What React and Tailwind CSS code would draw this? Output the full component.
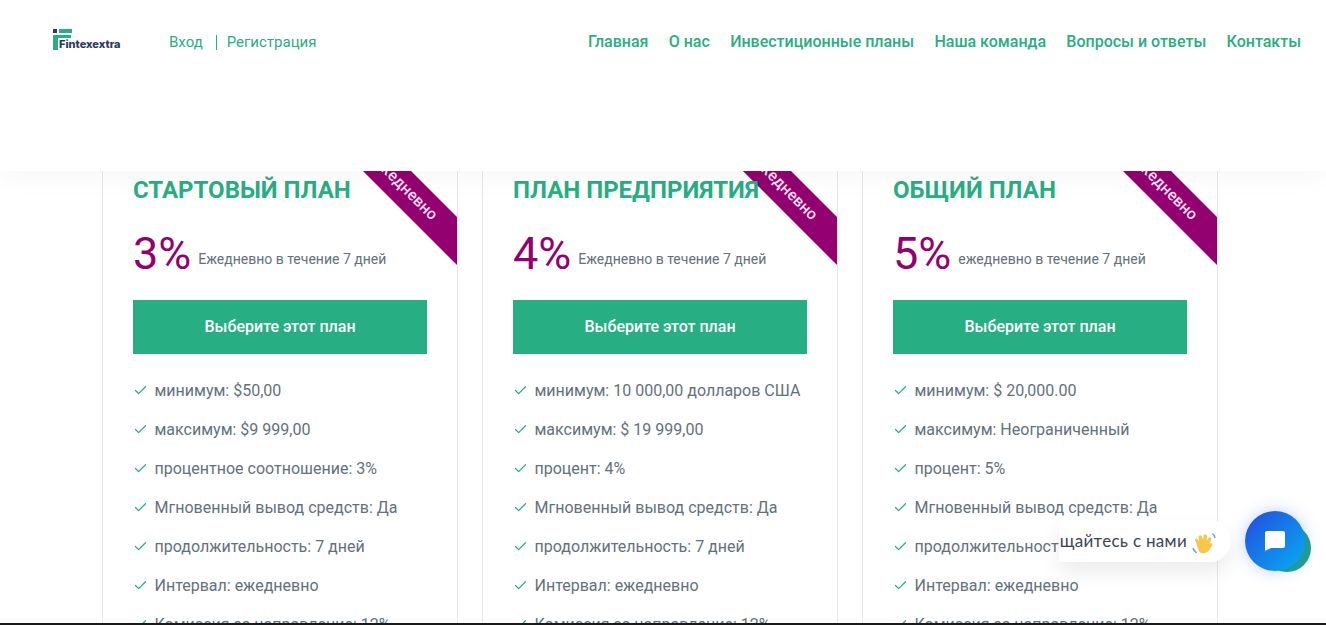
import React from "react";
import { Check } from "lucide-react";

const plans = [
  { t: "СТАРТОВЫЙ ПЛАН", p: "3%", s: "Ежедневно в течение 7 дней", i: ["минимум: $50,00", "максимум: $9 999,00", "процентное соотношение: 3%"] },
  { t: "ПЛАН ПРЕДПРИЯТИЯ", p: "4%", s: "Ежедневно в течение 7 дней", i: ["минимум: 10 000,00 долларов США", "максимум: $ 19 999,00", "процент: 4%"] },
  { t: "ОБЩИЙ ПЛАН", p: "5%", s: "ежедневно в течение 7 дней", i: ["минимум: $ 20,000.00", "максимум: Неограниченный", "процент: 5%"] },
];
const common = ["Мгновенный вывод средств: Да", "продолжительность: 7 дней", "Интервал: ежедневно", "Комиссия за направление: 12%"];
const nav = ["Главная", "О нас", "Инвестиционные планы", "Наша команда", "Вопросы и ответы", "Контакты"];

function Logo() {
  return (
    <div className="relative w-[68px] h-[21px] mb-[5px]">
      <svg width="20" height="21" viewBox="0 0 20 21" className="absolute left-0 top-0">
        <rect x="0" y="0" width="4" height="4" fill="#2b3a5e" />
        <rect x="6" y="0" width="13" height="4" fill="#27ae82" />
        <rect x="0" y="6" width="18" height="3" fill="#27ae82" />
        <rect x="0" y="6" width="5" height="15" fill="#27ae82" />
      </svg>
      <span className="absolute left-[6px] top-[9px] text-[11px] leading-[13px] font-extrabold text-[#2b3a5e] font-['Inter',sans-serif] whitespace-nowrap">Fintexextra</span>
    </div>
  );
}

function Card({ plan }) {
  return (
    <div className="relative w-[356px] h-full border-x border-[#e4e6e8] overflow-hidden px-[30px] pt-[4px]">
      <div className="absolute left-[269px] top-[-39px] w-[200px] h-[34px] rotate-45 origin-top-left bg-[#930070] flex items-center pl-[20px] pb-[3px] text-[16px] font-medium text-[#f3dcea]">
        <span>ежедневно</span>
      </div>
      <h3 className="relative text-[24px] leading-[30px] font-bold text-[#27ae82] whitespace-nowrap">{plan.t}</h3>
      <div className="flex items-center mt-[23px] h-[52px]">
        <span className="text-[45px] leading-[50px] text-[#930070]">{plan.p}</span>
        <span className="ml-[7px] mt-[10px] text-[14px] text-[#62717d]">{plan.s}</span>
      </div>
      <button className="mt-[20px] w-full h-[54px] bg-[#27ae82] text-white text-[16px] font-medium">Выберите этот план</button>
      <ul className="mt-[17px]">
        {[...plan.i, ...common].map((x) => (
          <li key={x} className="flex items-center h-[39px] text-[16px] text-[#62717d] whitespace-nowrap">
            <Check size={15} strokeWidth={2} className="text-[#27ae82] mr-[6.5px] shrink-0" />
            {x}
          </li>
        ))}
      </ul>
    </div>
  );
}

export default function App() {
  return (
    <div className="relative h-[625px] overflow-hidden bg-white flex flex-col font-['Roboto',sans-serif]">
      <header className="relative z-10 h-[171px] shrink-0 bg-white shadow-[0_8px_24px_rgba(0,0,0,0.03)] flex items-start justify-between pt-[29px] pl-[53px] pr-[25px]">
        <div className="flex items-center">
          <Logo />
          <div className="flex items-center h-[26px] ml-[48px] text-[15px] text-[#27ae82]">
            <span>Вход</span>
            <span className="ml-[13px] mr-[10px] w-px h-[15px] bg-[#27ae82]" />
            <span>Регистрация</span>
          </div>
        </div>
        <nav className="flex gap-[20.3px] h-[26px] items-center text-[16px] font-medium text-[#27ae82] whitespace-nowrap">
          {nav.map((n) => <span key={n}>{n}</span>)}
        </nav>
      </header>
      <main className="flex-1 min-h-0 flex justify-center gap-[24px] pr-[6px]">
        {plans.map((p) => <Card key={p.t} plan={p} />)}
      </main>
      <div className="h-[2px] shrink-0 bg-[#1a1a1a] relative z-10" />

      <div className="absolute z-20 left-[1059px] top-[520px] w-[172px] h-[42px] rounded-r-[21px] bg-white shadow-[0_10px_20px_rgba(0,0,0,0.08)] overflow-hidden flex items-center justify-end pr-[44px] text-[17px] tracking-[0.3px] text-[#3a4656] font-['Lato',sans-serif] whitespace-nowrap">
        <span>Пообщайтесь с нами</span>
      </div>
      <svg width="24" height="24" viewBox="0 0 24 24" className="absolute z-20 left-[1192px] top-[531px]">
        <path d="M5 14 L3 9 Q3 7 5 7.500 L7 10 L6.500 5.500 Q8 3.500 9.500 5 L11 8.500 L12 3.500 Q14.500 2.500 15 5 L14.500 9.500 L17.500 6 Q19.500 6 19.500 8 L17.500 12.500 L19.500 12 Q21 13 20 15 L16.500 20 Q13 23.500 9 22 Q6 20 5 14 Z" fill="#f5c84c" />
        <path d="M20.500 2.500 Q22.500 4 23 7 M1 17 Q2 20 4.500 22" stroke="#5b9bea" strokeWidth="1.500" fill="none" />
      </svg>
      <div className="absolute z-20 left-[1263px] top-[524px] w-[48px] h-[48px] rounded-full bg-[#22a08f]" />
      <div className="absolute z-20 left-[1245px] top-[511px] w-[60px] h-[60px] rounded-full bg-gradient-to-br from-[#2447dd] to-[#0bacf2] shadow-[0_0_16px_rgba(50,100,240,0.3)] flex items-center justify-center">
        <svg width="20" height="20" viewBox="0 0 20 20">
          <path d="M2 0 H18 Q20 0 20 2 V15 Q20 17 18 17 H6 L0 20 V2 Q0 0 2 0 Z" fill="#fff" />
        </svg>
      </div>
    </div>
  );
}
